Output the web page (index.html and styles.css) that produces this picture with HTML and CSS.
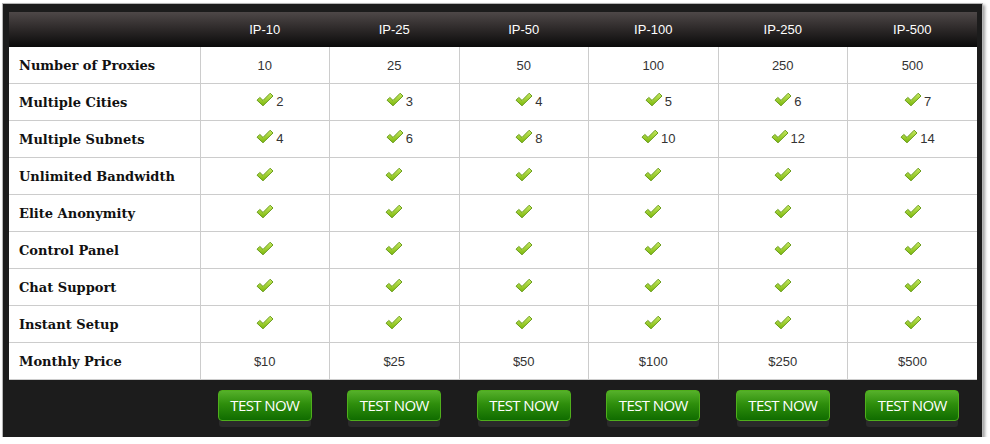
FILE: index.html
```html
<!DOCTYPE html>
<html>
<head>
<meta charset="utf-8">
<link rel="stylesheet" href="styles.css">
</head>
<body>
<svg width="0" height="0" class="defs">
  <defs>
    <linearGradient id="cg" x1="0" y1="0" x2="0" y2="1">
      <stop offset="0" stop-color="#c6e860"/>
      <stop offset="1" stop-color="#7cb80c"/>
    </linearGradient>
    <symbol id="chk" viewBox="0 0 18 15">
      <path d="M1 8.2 L3.8 5.4 L7 8.4 L14.2 1.2 L17 4 L7 13.8 Z" fill="url(#cg)" stroke="#5f9410" stroke-width="0.9" stroke-linejoin="round"/>
    </symbol>
  </defs>
</svg>
<div class="frame">
  <table class="grid">
    <colgroup>
      <col class="c-label">
      <col><col><col><col><col><col>
    </colgroup>
    <thead>
      <tr>
        <th></th><th>IP-10</th><th>IP-25</th><th>IP-50</th><th>IP-100</th><th>IP-250</th><th>IP-500</th>
      </tr>
    </thead>
    <tbody>
      <tr>
        <td class="lbl">Number of Proxies</td><td>10</td><td>25</td><td>50</td><td>100</td><td>250</td><td>500</td>
      </tr>
      <tr>
        <td class="lbl">Multiple Cities</td>
        <td><span class="ck"><svg><use href="#chk"/></svg>2</span></td>
        <td><span class="ck"><svg><use href="#chk"/></svg>3</span></td>
        <td><span class="ck"><svg><use href="#chk"/></svg>4</span></td>
        <td><span class="ck"><svg><use href="#chk"/></svg>5</span></td>
        <td><span class="ck"><svg><use href="#chk"/></svg>6</span></td>
        <td><span class="ck"><svg><use href="#chk"/></svg>7</span></td>
      </tr>
      <tr>
        <td class="lbl">Multiple Subnets</td>
        <td><span class="ck"><svg><use href="#chk"/></svg>4</span></td>
        <td><span class="ck"><svg><use href="#chk"/></svg>6</span></td>
        <td><span class="ck"><svg><use href="#chk"/></svg>8</span></td>
        <td><span class="ck"><svg><use href="#chk"/></svg>10</span></td>
        <td><span class="ck"><svg><use href="#chk"/></svg>12</span></td>
        <td><span class="ck"><svg><use href="#chk"/></svg>14</span></td>
      </tr>
      <tr>
        <td class="lbl">Unlimited Bandwidth</td>
        <td><svg class="only"><use href="#chk"/></svg></td>
        <td><svg class="only"><use href="#chk"/></svg></td>
        <td><svg class="only"><use href="#chk"/></svg></td>
        <td><svg class="only"><use href="#chk"/></svg></td>
        <td><svg class="only"><use href="#chk"/></svg></td>
        <td><svg class="only"><use href="#chk"/></svg></td>
      </tr>
      <tr>
        <td class="lbl">Elite Anonymity</td>
        <td><svg class="only"><use href="#chk"/></svg></td>
        <td><svg class="only"><use href="#chk"/></svg></td>
        <td><svg class="only"><use href="#chk"/></svg></td>
        <td><svg class="only"><use href="#chk"/></svg></td>
        <td><svg class="only"><use href="#chk"/></svg></td>
        <td><svg class="only"><use href="#chk"/></svg></td>
      </tr>
      <tr>
        <td class="lbl">Control Panel</td>
        <td><svg class="only"><use href="#chk"/></svg></td>
        <td><svg class="only"><use href="#chk"/></svg></td>
        <td><svg class="only"><use href="#chk"/></svg></td>
        <td><svg class="only"><use href="#chk"/></svg></td>
        <td><svg class="only"><use href="#chk"/></svg></td>
        <td><svg class="only"><use href="#chk"/></svg></td>
      </tr>
      <tr>
        <td class="lbl">Chat Support</td>
        <td><svg class="only"><use href="#chk"/></svg></td>
        <td><svg class="only"><use href="#chk"/></svg></td>
        <td><svg class="only"><use href="#chk"/></svg></td>
        <td><svg class="only"><use href="#chk"/></svg></td>
        <td><svg class="only"><use href="#chk"/></svg></td>
        <td><svg class="only"><use href="#chk"/></svg></td>
      </tr>
      <tr>
        <td class="lbl">Instant Setup</td>
        <td><svg class="only"><use href="#chk"/></svg></td>
        <td><svg class="only"><use href="#chk"/></svg></td>
        <td><svg class="only"><use href="#chk"/></svg></td>
        <td><svg class="only"><use href="#chk"/></svg></td>
        <td><svg class="only"><use href="#chk"/></svg></td>
        <td><svg class="only"><use href="#chk"/></svg></td>
      </tr>
      <tr>
        <td class="lbl">Monthly Price</td><td>$10</td><td>$25</td><td>$50</td><td>$100</td><td>$250</td><td>$500</td>
      </tr>
    </tbody>
  </table>
  <div class="actions">
    <div></div>
    <div class="cell"><a class="btn">TEST NOW</a></div>
    <div class="cell"><a class="btn">TEST NOW</a></div>
    <div class="cell"><a class="btn">TEST NOW</a></div>
    <div class="cell"><a class="btn">TEST NOW</a></div>
    <div class="cell"><a class="btn">TEST NOW</a></div>
    <div class="cell"><a class="btn">TEST NOW</a></div>
  </div>
</div>
</body>
</html>
```
FILE: styles.css
```css
html, body {
  margin: 0;
  padding: 0;
  background: #ffffff;
}
body {
  padding: 4px 0 0 3px;
  font-family: "Liberation Sans", Arial, sans-serif;
}
.defs {
  position: absolute;
  width: 0;
  height: 0;
}
.frame {
  width: 968px;
  background: #1c1c1c;
  padding: 8px 5px 0 6px;
  box-shadow: 0 0 0 1px #b5b5b5, 2px 2px 3px 1px #a0a0a0;
}
.grid {
  width: 968px;
  border-collapse: collapse;
  table-layout: fixed;
  background: #ffffff;
}
.c-label {
  width: 191px;
}
thead tr {
  height: 35px;
  background: linear-gradient(to bottom, #4e4848 0%, #2c2828 50%, #0a0a0a 100%);
}
th {
  color: #ffffff;
  font-weight: normal;
  font-size: 13px;
  text-align: center;
  padding: 0;
}
td {
  height: 36px;
  padding: 0;
  border: 1px solid #cccccc;
  text-align: center;
  vertical-align: middle;
  font-size: 13px;
  color: #333333;
}
tbody tr:first-child td {
  border-top: none;
}
td:first-child {
  border-left: none;
}
td:last-child {
  border-right: none;
}
.lbl {
  text-align: left;
  padding-left: 10px;
  font-family: "DejaVu Serif", "Liberation Serif", serif;
  font-weight: bold;
  font-size: 13px;
  color: #111111;
}
.ck {
  display: inline-flex;
  align-items: center;
  gap: 2px;
  margin-left: 10px;
}
.ck svg, svg.only {
  width: 18px;
  height: 15px;
  display: inline-block;
}
svg.only {
  vertical-align: middle;
  margin-top: -5px;
}
.ck svg {
  margin-top: -4px;
}
.actions {
  display: grid;
  grid-template-columns: 191px repeat(6, 1fr);
  height: 57px;
}
.cell {
  display: flex;
  justify-content: center;
  padding-top: 10px;
}
.btn {
  display: flex;
  align-items: center;
  justify-content: center;
  width: 92px;
  height: 27px;
  padding-bottom: 2px;
  border: 1px solid #4fae1c;
  border-radius: 4px;
  background: linear-gradient(to bottom, #55b02a 0%, #2e8e0c 45%, #106c00 100%);
  color: #ffffff;
  font-family: "Open Sans", "Liberation Sans", sans-serif;
  font-size: 15px;
  letter-spacing: -0.6px;
  box-shadow: 0 7px 0 -1px #2a2a2a;
}
```
